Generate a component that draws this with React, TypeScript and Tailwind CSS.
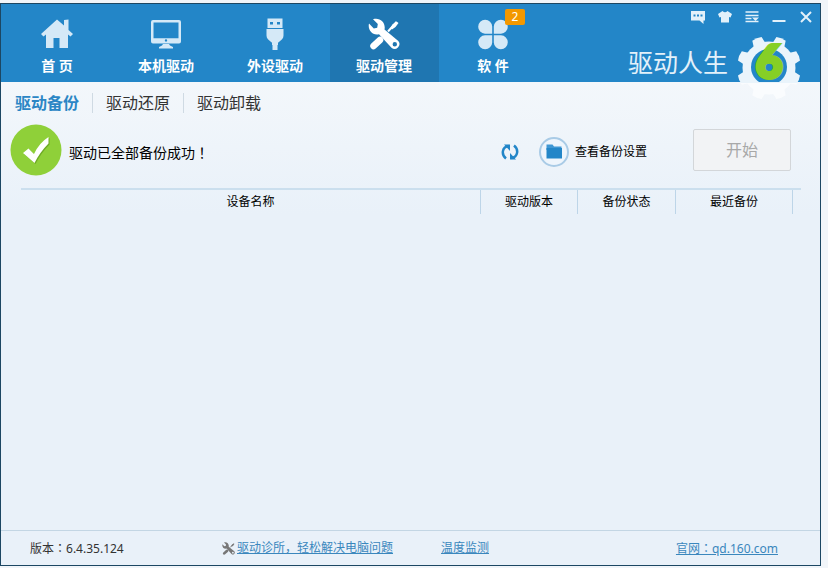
import { useState } from 'react'
import type { ReactNode } from 'react'
import clsx from 'clsx'

function HomeIcon() {
  return (
    <svg viewBox="0 0 32 32" className="size-8" fill="currentColor" aria-hidden="true">
      <path d="M16 1.500 0 16 2.500 18.500 5 16.500V30h7.500v-10h6v10H27V16.500l2.500 2L32 16l-4.500-4V1.500l-4.500.5v5.500z" />
    </svg>
  )
}

function MonitorIcon() {
  return (
    <svg viewBox="0 0 32 32" className="size-8" fill="currentColor" aria-hidden="true">
      <path
        fillRule="evenodd"
        d="M3 2h26a2 2 0 0 1 2 2v19.500a2 2 0 0 1-2 2H3a2 2 0 0 1-2-2V4a2 2 0 0 1 2-2zM3.500 4.500v15.700h25V4.500zM16 21.200a1.200 1.200 0 1 0 0 2.400 1.200 1.200 0 0 0 0-2.400z"
      />
      <path d="M13 26h6l1 1.500 3 1.500v1.500H9V29l3-1.500z" />
    </svg>
  )
}

function UsbIcon() {
  return (
    <svg viewBox="0 0 32 32" className="size-8" fill="currentColor" aria-hidden="true">
      <path
        fillRule="evenodd"
        d="M8.500 0.500h15V10h-15zM11 4v2.500h3V4zM18 4v2.500h3V4z"
      />
      <path d="M7.500 11h17v6.500c0 3-2 4.500-4 6l-1.500 1.200V27h-.5v5h-5v-5h-.5v-2.300l-1.500-1.200c-2-1.500-4-3-4-6z" />
    </svg>
  )
}

function ToolsIcon({ className }: { className?: string }) {
  return (
    <svg viewBox="0 0 32 32" className={className} aria-hidden="true">
      <path d="M28.500 4 20 13.500" stroke="currentColor" strokeWidth="2" fill="none" />
      <path d="M30.500 5 28.500 3.500l-4 3-2 3.500 1.500 1.500 3.500-2.500z" fill="currentColor" />
      <path d="M12 22 5.500 28" stroke="currentColor" strokeWidth="6.500" strokeLinecap="round" fill="none" />
      <path
        fillRule="evenodd"
        fill="currentColor"
        d="M5 1.300 9.800 6l-.6 3.700-3.400.8L1 5.500C-.5 11 4 18 11 16.200l12.500 13.500a4.800 4.800 0 0 0 6.800-6.700L16.500 11.500C18 5 12-1 5 1.300zM26.800 24a2.200 2.200 0 1 1 0 4.400 2.200 2.200 0 0 1 0-4.400z"
      />
    </svg>
  )
}

function CloverIcon() {
  return (
    <svg viewBox="0 0 32 32" className="size-8" fill="currentColor" aria-hidden="true">
      <path d="M15.200 15.700H8A7 7 0 1 1 15.200 8.500z" />
      <path d="M16.800 15.700H24A7 7 0 1 0 16.800 8.500z" />
      <path d="M15.200 17.300H8A7 7 0 1 0 15.200 24.500z" />
      <path d="M16.800 17.300H24A7 7 0 1 1 16.800 24.500z" />
    </svg>
  )
}

const TEETH = [22.5, 67.5, 112.5, 157.5, 202.5, 247.5, 292.5, 337.5]

function GearLogo() {
  return (
    <svg viewBox="0 0 64 64" className="size-16 overflow-visible" aria-hidden="true">
      <defs>
        <clipPath id="gear-top">
          <rect width="64" height="46" />
        </clipPath>
        <linearGradient id="gear-fill" x1="0" y1="0" x2="0" y2="1">
          <stop offset="0.73" stopColor="#eaf4fb" />
          <stop offset="0.74" stopColor="#fafcfe" />
        </linearGradient>
        <mask id="gear-shape">
          <circle cx="32" cy="32" r="26.500" fill="#fff" />
          {TEETH.map((angle) => (
            <path
              key={angle}
              d="M25.500 9 27 0.500Q32-.8 37 .5L38.500 9z"
              fill="#fff"
              transform={`rotate(${angle} 32 32)`}
            />
          ))}
        </mask>
      </defs>
      <rect width="64" height="64" fill="url(#gear-fill)" mask="url(#gear-shape)" />
      <circle cx="32" cy="31" r="18" fill="#2386c8" clipPath="url(#gear-top)" />
      <text
        x="32"
        y="42"
        textAnchor="middle"
        fill="#86cf26"
        stroke="#86cf26"
        strokeWidth="4"
        fontSize="46"
        fontWeight="900"
        fontFamily="Lato, sans-serif"
      >
        6
      </text>
    </svg>
  )
}

// full-width punctuation sits in the middle of its cell in the TC face
function Mark({ children }: { children: string }) {
  return <span className="font-['Noto_Sans_CJK_TC',sans-serif]">{children}</span>
}

interface NavItem {
  label: string
  icon: ReactNode
  badge?: number
}

const navItems: NavItem[] = [
  { label: '首 页', icon: <HomeIcon /> },
  { label: '本机驱动', icon: <MonitorIcon /> },
  { label: '外设驱动', icon: <UsbIcon /> },
  { label: '驱动管理', icon: <ToolsIcon className="size-8" /> },
  { label: '软 件', icon: <CloverIcon />, badge: 2 },
]

const windowControls = [
  {
    label: '反馈',
    icon: (
      <path
        fillRule="evenodd"
        fill="currentColor"
        d="M1 2h14v9.500h-1.500v3.500L9.500 11.500H1zM3.500 5.500v2h2v-2zM7 5.500v2h2v-2zM10.500 5.500v2h2v-2z"
      />
    ),
  },
  {
    label: '换肤',
    icon: <path fill="currentColor" d="M5.500 2Q8 4.500 10.500 2L15 5l-1.500 3.500-1.500-.6V13.500H4V7.900l-1.500.6L1 5z" />,
  },
  {
    label: '菜单',
    icon: (
      <>
        <path stroke="currentColor" strokeWidth="1.500" d="M1.500 3h13M1.500 6.500h13M1.500 9.500h6M1.500 12.500h13" />
        <path fill="currentColor" d="M8 8.500h7l-3.500 3.500z" />
      </>
    ),
  },
  { label: '最小化', icon: <path stroke="currentColor" strokeWidth="2" d="M1.500 12h13" /> },
  { label: '关闭', icon: <path stroke="currentColor" strokeWidth="2" d="m3 3 10 10M13 3 3 13" /> },
]

const tabs = ['驱动备份', '驱动还原', '驱动卸载']

function Header() {
  const [active, setActive] = useState('驱动管理')

  return (
    <header className="flex h-[78px] justify-between bg-[#2386c8] text-white">
      <nav className="flex pl-[2px]">
        {navItems.map(({ label, icon, badge }) => (
          <button
            key={label}
            onClick={() => setActive(label)}
            className={clsx(
              'relative flex w-[109px] flex-col items-center gap-1 pt-[14px] pr-px',
              active === label ? 'bg-[#1f76b1]' : 'hover:bg-[#2a8fd2]',
            )}
          >
            <span className={active === label ? 'text-white' : 'text-[#d5e9f7]'}>{icon}</span>
            <span className="text-sm leading-6 font-bold whitespace-nowrap">{label}</span>
            {badge && (
              <span className="absolute top-[5px] left-[66px] h-4 w-5 rounded-xs bg-[#f39800] text-center text-xs leading-4">
                {badge}
              </span>
            )}
          </button>
        ))}
      </nav>

      <div className="flex flex-col items-end">
        <div className="flex gap-[11px] pt-[5px] pr-[6px] text-[#e3f1fa]">
          {windowControls.map(({ label, icon }) => (
            <button key={label} aria-label={label} className="hover:text-white">
              <svg viewBox="0 0 16 16" className="size-4" fill="none">
                {icon}
              </svg>
            </button>
          ))}
        </div>
        <div className="relative z-10 flex items-start gap-[9px] pt-[14px] pr-[19px]">
          <span className="pt-[7px] text-[25px] leading-8 whitespace-nowrap text-[#e3f1fa]">驱动人生</span>
          <div className="-mt-[3px]">
            <GearLogo />
          </div>
        </div>
      </div>
    </header>
  )
}

function StatusBar() {
  return (
    <div className="flex items-center pt-px pr-[29px] pl-[9px]">
      <svg viewBox="0 0 52 52" className="size-[52px] shrink-0" aria-hidden="true">
        <circle cx="26" cy="26" r="25.500" fill="#8fd039" />
        <path
          d="m13 29 5.500-4.500 5.500 5.500Q29 19 38.500 13v6.500Q30 28 24.500 39z"
          fill="#5f9a1c"
          opacity="0.7"
          transform="translate(1 1)"
        />
        <path d="m13 29 5.500-4.500 5.500 5.500Q29 19 38.500 13v6.500Q30 28 24.500 39z" fill="#fff" />
      </svg>
      <p className="pt-1 pl-[7px] text-sm text-black">
        驱动已全部备份成功<Mark>！</Mark>
      </p>

      <button aria-label="刷新" className="mt-1 ml-auto text-[#2386c8]">
        <svg viewBox="0 0 18 18" className="size-[18px]" fill="none">
          <path d="M7.500 3C1 4 0 11.500 5 15.500" stroke="currentColor" strokeWidth="2.500" />
          <path d="M3 1.500h6V8zM15 16.500H9V10z" fill="currentColor" />
          <path d="M10.500 15C17 14 18 6.500 13 2.500" stroke="currentColor" strokeWidth="2.500" />
        </svg>
      </button>
      <button className="mt-1 ml-5 flex items-center gap-[6px] text-xs text-black">
        <svg viewBox="0 0 30 30" className="size-[30px]" aria-hidden="true">
          <circle cx="15" cy="15" r="14" fill="#eef5fc" stroke="#a9cbe6" strokeWidth="2" />
          <path d="M7.500 7.500h6l1.500 2h7.500V13h-15z" fill="#3f97d4" />
          <path d="M7.500 11h15.500v10.500H7.500z" fill="#2386c8" />
        </svg>
        查看备份设置
      </button>
      <button
        disabled
        className="ml-[46px] h-[42px] w-[98px] rounded-xs border border-[#d3d6d9] bg-[#f2f3f5] text-base text-[#a8a8a8]"
      >
        开始
      </button>
    </div>
  )
}

function BackupTable() {
  return (
    <div className="mt-3 mr-[19px] ml-5 border-t-2 border-[#cbdfee] pr-2">
      <table className="w-full table-fixed text-xs text-black">
        <thead>
          <tr className="h-6 *:border-r *:border-[#bdd5e8] *:font-normal">
            <th>设备名称</th>
            <th className="w-[97px]">驱动版本</th>
            <th className="w-[98px]">备份状态</th>
            <th className="w-[117px]">最近备份</th>
          </tr>
        </thead>
        <tbody />
      </table>
    </div>
  )
}

function Footer() {
  return (
    <footer className="mt-auto flex h-[35px] items-center border-t border-[#c3d6e4] pr-[42px] pl-[29px] text-xs text-[#333]">
      <span className="w-48">
        版本<Mark>：</Mark>6.4.35.124
      </span>
      <ToolsIcon className="mr-[2px] size-[13px] text-[#777]" />
      <a href="#clinic" className="text-[#3a87bd] underline">
        驱动诊所，轻松解决电脑问题
      </a>
      <a href="#temperature" className="ml-12 text-[#3a87bd] underline">
        温度监测
      </a>
      <a href="#site" className="ml-auto text-[#3a87bd] underline">
        官网<Mark>：</Mark>qd.160.com
      </a>
    </footer>
  )
}

export default function App() {
  const [tab, setTab] = useState(tabs[0])

  return (
    <div className="flex min-h-screen bg-[#f1f5f9] pt-[3px] pr-[7px] pb-[2px] font-['Noto_Sans','Noto_Sans_CJK_SC',sans-serif]">
      <div className="flex flex-1 flex-col border border-[#1c4763] bg-[#e9f1f9]">
        <Header />
        <main className="bg-linear-to-b from-[#f3f7fb] to-[#e9f1f9]">
          <div role="tablist" className="flex h-[41px] items-center divide-x divide-[#cfdae3] pl-px">
            {tabs.map((name) => (
              <button
                key={name}
                role="tab"
                aria-selected={tab === name}
                onClick={() => setTab(name)}
                className={clsx(
                  'h-5 px-[13px] text-base leading-5',
                  tab === name ? 'font-bold text-[#2b86c5]' : 'text-[#333]',
                )}
              >
                {name}
              </button>
            ))}
          </div>
          <StatusBar />
          <BackupTable />
        </main>
        <Footer />
      </div>
    </div>
  )
}
